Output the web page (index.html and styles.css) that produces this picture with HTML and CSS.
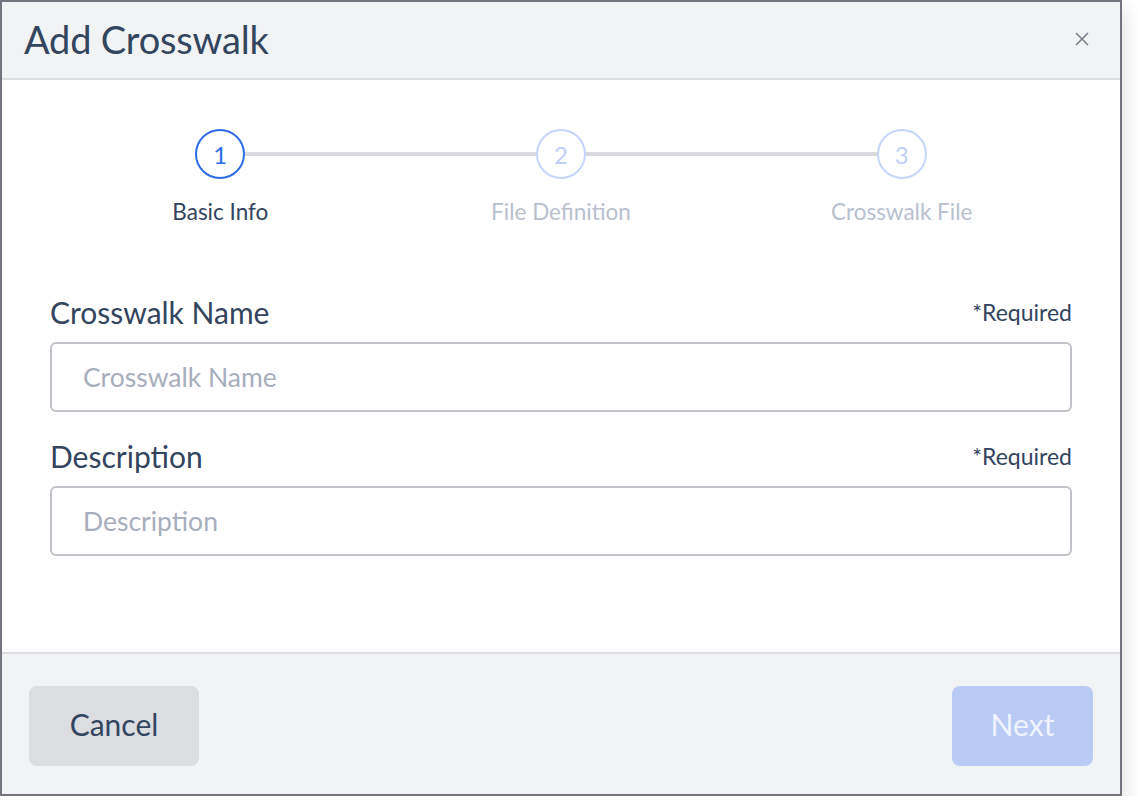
FILE: index.html
```html
<!DOCTYPE html>
<html lang="en">
<head>
  <meta charset="UTF-8">
  <title>Add Crosswalk</title>
  <link rel="stylesheet" href="styles.css">
</head>
<body>

<div class="modal">
  <div class="modal-header">
    <h1>Add Crosswalk</h1>
    <button class="close-btn" aria-label="Close">
      <svg width="14" height="14" viewBox="0 0 14 14"><path d="M1 1L13 13M13 1L1 13" stroke="#7b7f88" stroke-width="1.6" fill="none"/></svg>
    </button>
  </div>

  <div class="modal-body">
    <div class="stepper">
      <div class="step active">
        <div class="step-circle">1</div>
        <div class="step-label">Basic Info</div>
      </div>
      <div class="step">
        <div class="step-circle">2</div>
        <div class="step-label">File Definition</div>
      </div>
      <div class="step">
        <div class="step-circle">3</div>
        <div class="step-label">Crosswalk File</div>
      </div>
    </div>

    <div class="field">
      <div class="field-top">
        <label for="cwName">Crosswalk Name</label>
        <span class="required">*Required</span>
      </div>
      <input type="text" id="cwName" placeholder="Crosswalk Name">
    </div>

    <div class="field">
      <div class="field-top">
        <label for="cwDesc">Description</label>
        <span class="required">*Required</span>
      </div>
      <input type="text" id="cwDesc" placeholder="Description">
    </div>
  </div>

  <div class="modal-footer">
    <button class="btn btn-cancel">Cancel</button>
    <button class="btn btn-next" disabled>Next</button>
  </div>
</div>

</body>
</html>
```

FILE: styles.css
```css
html, body {
  margin: 0;
  padding: 0;
  background-color: #fff;
  font-family: Lato, "Noto Sans", sans-serif;
  color: #33445f;
}

.modal {
  width: 1122px;
  height: 796px;
  box-sizing: border-box;
  border: 2px solid #74747f;
  display: flex;
  flex-direction: column;
  background-color: #fff;
  box-shadow: 5px 8px 16px rgba(0, 0, 0, 0.1);
}

.modal-header {
  height: 78px;
  box-sizing: border-box;
  background-color: #f2f3f5;
  border-bottom: 2px solid #dcdde0;
  display: flex;
  align-items: center;
  justify-content: space-between;
  padding: 0 31px 2px 22px;
}

.modal-header h1 {
  margin: 0;
  font-size: 38px;
  font-weight: 400;
  color: #33455f;
  letter-spacing: -0.2px;
}

.close-btn {
  background: none;
  border: none;
  padding: 0;
  width: 14px;
  height: 14px;
  display: flex;
  cursor: pointer;
}

.modal-body {
  flex-grow: 1;
  padding: 49px 48px 0 48px;
}

.stepper {
  display: grid;
  grid-template-columns: repeat(3, 1fr);
}

.step {
  position: relative;
  display: flex;
  flex-direction: column;
  align-items: center;
}

.step + .step::before {
  content: "";
  position: absolute;
  top: 23px;
  height: 4px;
  left: calc(-50% + 25px);
  right: calc(50% + 25px);
  background-color: #d9dade;
}

.step-circle {
  width: 50px;
  height: 50px;
  box-sizing: border-box;
  border-radius: 50%;
  border: 2px solid #c5d5fb;
  color: #bfd0fa;
  background-color: #fff;
  display: flex;
  align-items: center;
  justify-content: center;
  font-size: 24px;
}

.step-label {
  margin-top: 18px;
  font-size: 22.5px;
  line-height: 30px;
  color: #b8c0ce;
}

.step.active .step-circle {
  border-color: #2f6be6;
  color: #2f6be6;
}

.step.active .step-label {
  color: #33445f;
}

.field {
  display: flex;
  flex-direction: column;
}

.stepper + .field {
  margin-top: 65px;
}

.field + .field {
  margin-top: 24px;
}

.field-top {
  display: flex;
  justify-content: space-between;
  align-items: center;
  height: 40px;
  line-height: 40px;
  margin-bottom: 10px;
}

.field-top label {
  font-size: 30px;
}

.required {
  font-size: 23px;
}

.field input {
  height: 70px;
  box-sizing: border-box;
  border: 2px solid #bfc2c7;
  border-radius: 6px;
  padding: 0 31px;
  font-family: Lato, "Noto Sans", sans-serif;
  font-size: 26.5px;
  color: #33445f;
  outline: none;
}

.field input::placeholder {
  color: #a7aebc;
}

.modal-footer {
  height: 142px;
  box-sizing: border-box;
  background-color: #f2f3f5;
  border-top: 2px solid #dcdde0;
  display: flex;
  justify-content: space-between;
  padding: 32px 27px 0 27px;
}

.btn {
  height: 80px;
  border: none;
  border-radius: 8px;
  font-family: Lato, "Noto Sans", sans-serif;
  font-size: 30px;
  padding: 0 0 4px 0;
  cursor: pointer;
}

.btn-cancel {
  width: 170px;
  background-color: #dcdde1;
  color: #33445f;
}

.btn-next {
  width: 141px;
  background-color: #b9cbf4;
  color: #f1f4fd;
  cursor: default;
}
```
